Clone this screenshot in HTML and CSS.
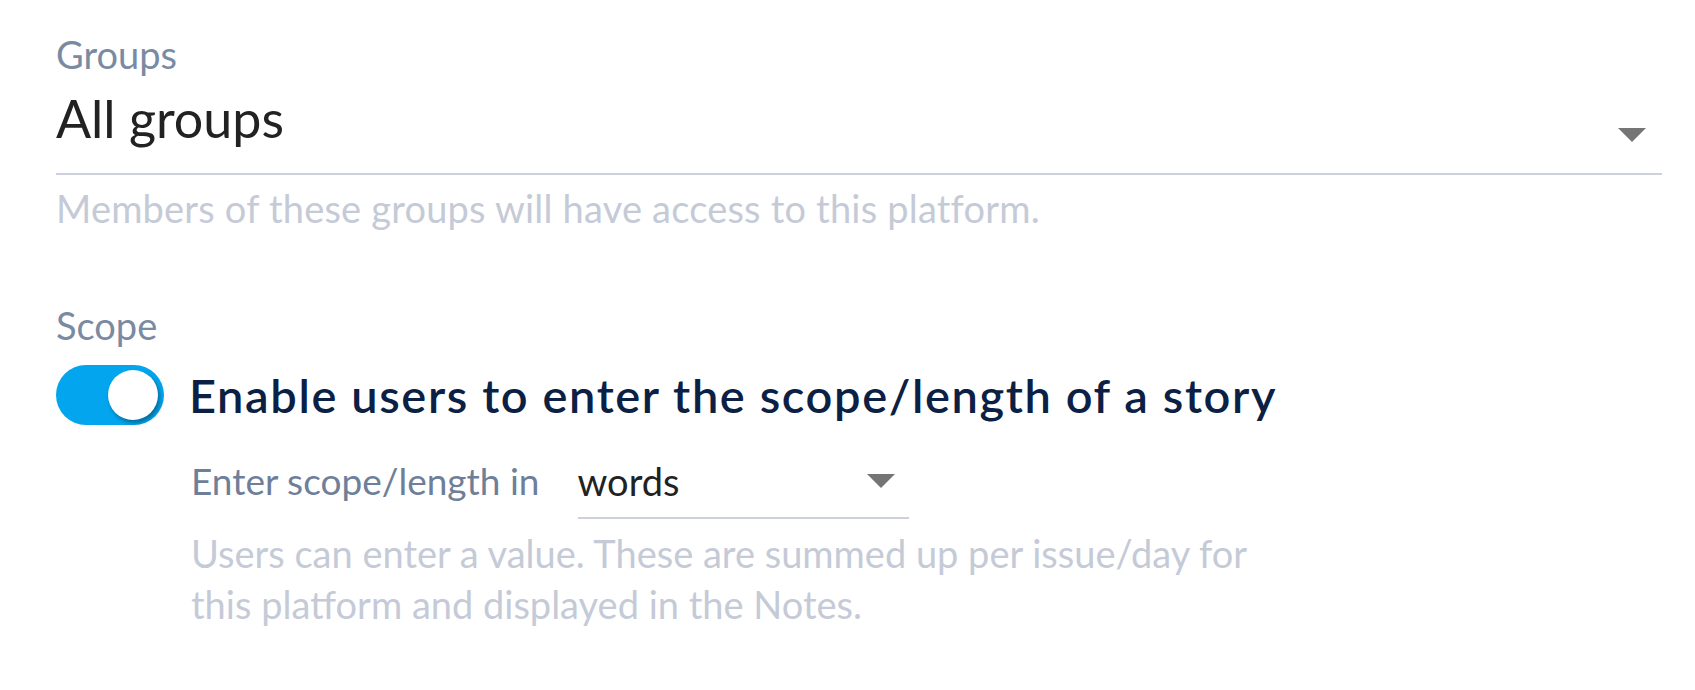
FILE: index.html
```html
<!DOCTYPE html>
<html lang="en">
<head>
	<meta charset="utf-8">
	<meta name="viewport" content="width=device-width, initial-scale=1.0">
	<title>Platform settings</title>
	<link rel="stylesheet" href="styles.css">
</head>
<body>
	<div class="page">
		<div class="field">
			<div class="field-label">Groups</div>
			<div class="select select-big">
				<span class="select-value">All groups</span>
				<span class="caret"></span>
			</div>
			<div class="hint">Members of these groups will have access to this platform.</div>
		</div>

		<div class="field field-scope">
			<div class="field-label">Scope</div>
			<div class="toggle-row">
				<span class="toggle on"><span class="knob"></span></span>
				<span class="toggle-text">Enable users to enter the scope/length of a story</span>
			</div>
			<div class="sub">
				<div class="unit-row">
					<span class="unit-label">Enter scope/length in</span>
					<div class="select select-small">
						<span class="select-value">words</span>
						<span class="caret"></span>
					</div>
				</div>
				<div class="hint hint-wrap">Users can enter a value. These are summed up per issue/day for this platform and displayed in the Notes.</div>
			</div>
		</div>
	</div>
</body>
</html>
```

FILE: styles.css
```css
body{
	margin: 0;
	background: #fff;
	font-family: Lato, "Open Sans", sans-serif;
}
.page{
	padding: 32px 33px 0 56px;
}
.field-label{
	font-size: 38px;
	line-height: 44px;
	color: #7a8aa3;
}
.select{
	display: flex;
	align-items: center;
	border-bottom: 2px solid #cdd1dd;
}
.select-value{
	flex: 1;
	color: #222;
}
.caret{
	width: 0;
	height: 0;
	border-left: 14px solid transparent;
	border-right: 14px solid transparent;
	border-top: 14px solid #757575;
}
.select-big{
	padding: 12px 16px 24px 0;
}
.select-big .select-value{
	font-size: 52px;
	line-height: 61px;
}
.select-big .caret{
	align-self: flex-end;
	margin-bottom: 7px;
}
.hint{
	margin-top: 11px;
	font-size: 38px;
	line-height: 44px;
	letter-spacing: 0.2px;
	color: #c5cad7;
}
.field-scope{
	margin-top: 73px;
}
.toggle-row{
	display: flex;
	align-items: center;
	margin-top: 18px;
}
.toggle{
	position: relative;
	width: 108px;
	height: 60px;
	border-radius: 30px;
	background: #d5d9e2;
	flex-shrink: 0;
}
.toggle.on{
	background: #03a5ef;
}
.toggle .knob{
	position: absolute;
	top: 5px;
	left: 5px;
	width: 50px;
	height: 50px;
	border-radius: 50%;
	background: #fff;
	box-shadow: 2px 3px 4px rgba(0, 0, 0, 0.35);
}
.toggle.on .knob{
	left: 52px;
}
.toggle-text{
	margin-left: 25px;
	font-size: 47px;
	font-weight: 600;
	letter-spacing: 1.6px;
	color: #0c1f45;
}
.sub{
	padding-left: 135px;
}
.unit-row{
	display: flex;
	align-items: flex-start;
	margin-top: 34px;
}
.unit-label{
	font-size: 37px;
	line-height: 44px;
	color: #6f7f99;
	margin-right: 38px;
}
.select-small{
	width: 317px;
	padding: 0 14px 14px 0;
}
.select-small .select-value{
	font-size: 38px;
	line-height: 44px;
}
.hint-wrap{
	margin-top: 9px;
	width: 1075px;
	line-height: 51px;
	letter-spacing: 0;
}
```
